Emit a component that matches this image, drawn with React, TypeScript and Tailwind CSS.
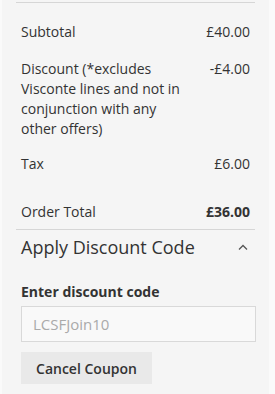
export default function App() {
  return (
    <div className="w-[275px] h-[394px] bg-[#fafafa] flex" style={{ fontFamily: '"Open Sans", sans-serif' }}>
      <div className="ml-[2px] w-[267px] h-full bg-[#f5f5f5] px-[14px] text-[#333]">
        <div className="border-t border-[#d6d6d6] mt-[2px]" />
        <div className="px-[5px] text-[14px] leading-[20px]">
          <div className="flex justify-between mt-[19px]">
            <span>Subtotal</span>
            <span>£40.00</span>
          </div>
          <div className="flex justify-between mt-[17px]">
            <span className="w-[172px]">Discount (*excludes Visconte lines and not in conjunction with any other offers)</span>
            <span>-£4.00</span>
          </div>
          <div className="flex justify-between mt-[15px]">
            <span>Tax</span>
            <span>£6.00</span>
          </div>
          <div className="flex justify-between mt-[28px] pb-[7px]">
            <span>Order Total</span>
            <span className="font-bold">£36.00</span>
          </div>
        </div>
        <div className="border-t border-[#d6d6d6]" />
        <div className="px-[5px] flex justify-between items-center mt-[4px]">
          <span className="text-[18px] leading-[26px] text-[#333]">Apply Discount Code</span>
          <svg width="10" height="7" viewBox="0 0 10 7" className="mr-[2px]">
            <path d="M1 5.5 L5 1.5 L9 5.5" fill="none" stroke="#555" strokeWidth="1.3" />
          </svg>
        </div>
        <div className="px-[5px] mt-[22px] text-[14px] font-bold leading-[20px]">Enter discount code</div>
        <div className="ml-[5px] mr-[-1px] mt-[4px] h-[36px] border border-[#d9d9d9] bg-[#f9f9f9] flex items-center px-[11px] text-[15px] text-[#aaa]">
          LCSFJoin10
        </div>
        <div className="ml-[5px] mt-[10px] w-[131px] h-[32px] bg-[#e9e9e9] flex items-center justify-center text-[14px] font-semibold text-[#333]">
          Cancel Coupon
        </div>
      </div>
    </div>
  );
}
